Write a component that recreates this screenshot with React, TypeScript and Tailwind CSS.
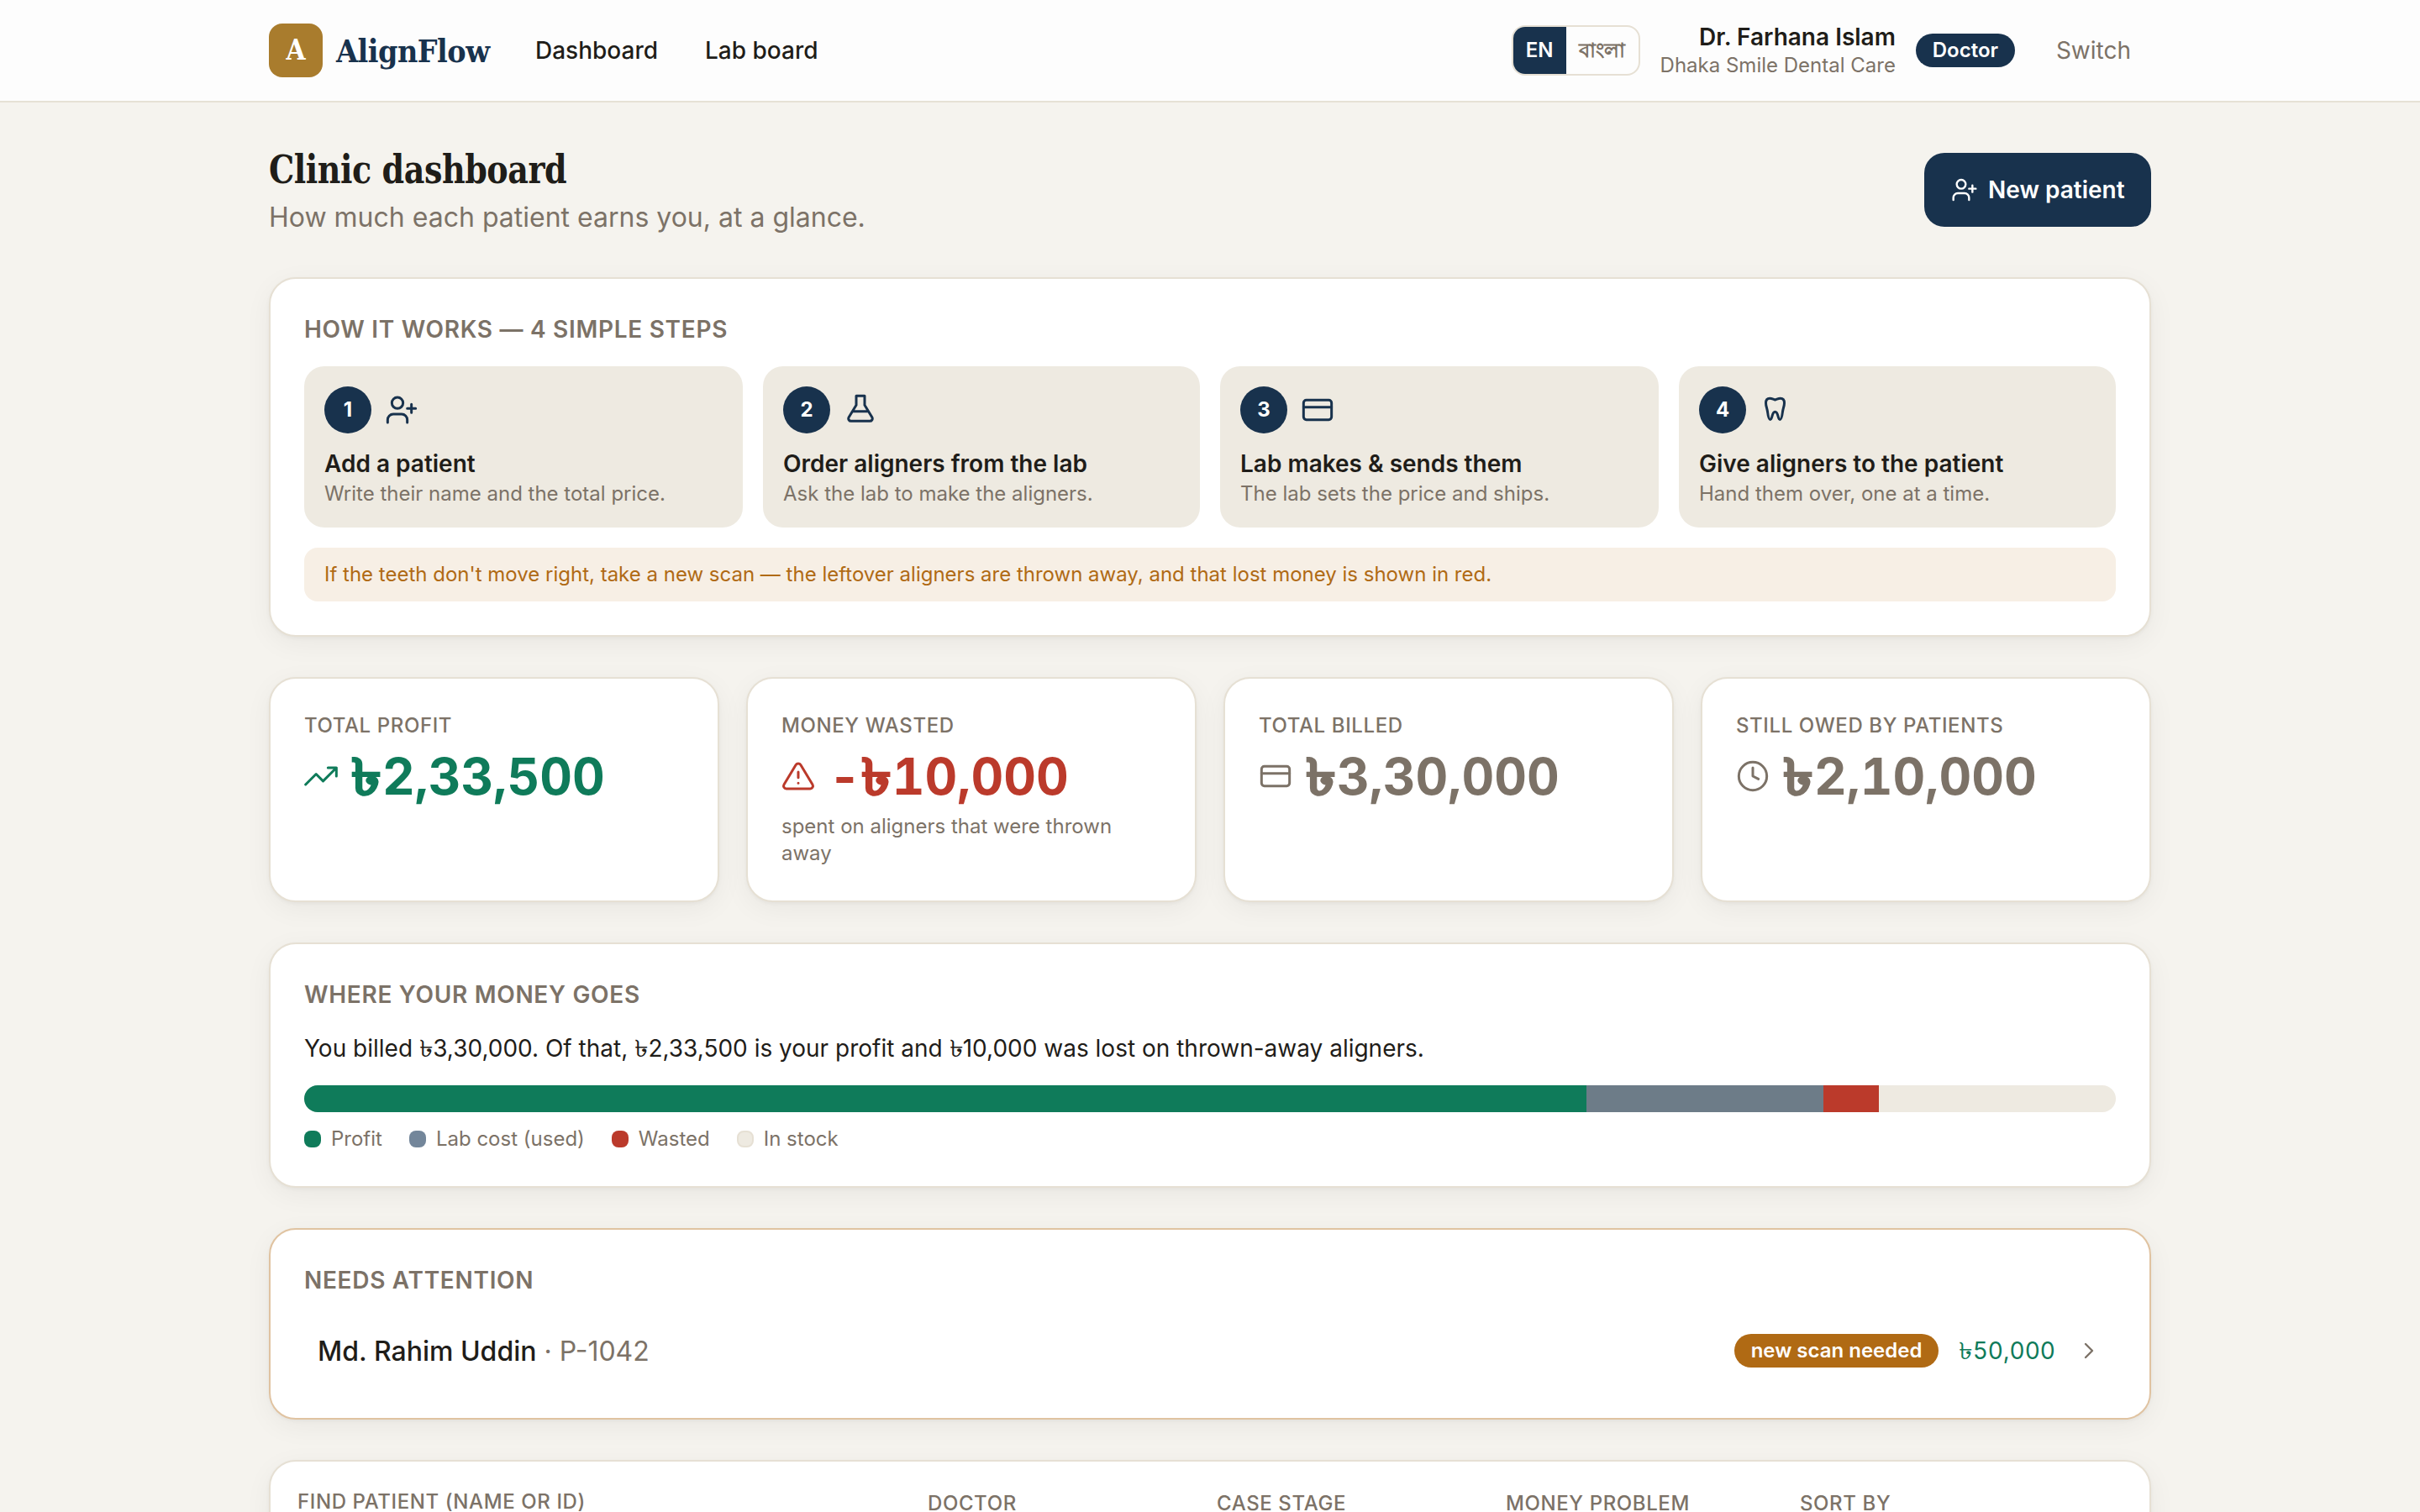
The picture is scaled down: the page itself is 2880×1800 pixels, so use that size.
import type { ReactNode } from 'react'
import clsx from 'clsx'

type IconProps = { className?: string }

function Svg({ className, children }: IconProps & { children: ReactNode }) {
  return (
    <svg
      viewBox="0 0 24 24"
      fill="none"
      stroke="currentColor"
      strokeWidth={1.8}
      strokeLinecap="round"
      strokeLinejoin="round"
      className={clsx('shrink-0', className)}
    >
      {children}
    </svg>
  )
}

const UserPlusIcon = ({ className }: IconProps) => (
  <Svg className={className}>
    <circle cx="9" cy="7" r="4" />
    <path d="M2 21v-2a4 4 0 0 1 4-4h6a4 4 0 0 1 4 4v2M19 8v6M22 11h-6" />
  </Svg>
)

const FlaskIcon = ({ className }: IconProps) => (
  <Svg className={className}>
    <path d="M9 2h6M9 2v6.500L3.700 17.300a1.800 1.800 0 0 0 1.600 2.700h13.400a1.800 1.800 0 0 0 1.600-2.700L15 8.500V2M6.500 13h11" />
  </Svg>
)

const CardIcon = ({ className }: IconProps) => (
  <Svg className={className}>
    <rect x="2" y="5" width="20" height="14" rx="2" />
    <path d="M2 10h20" />
  </Svg>
)

const ToothIcon = ({ className }: IconProps) => (
  <Svg className={className}>
    <path d="M11.100 4.800C9.500 4.300 8.800 3.700 7.300 3.700 5.500 3.700 4.500 5 4.500 7c0 2.200.9 4 1.200 6.200.3 2.400.7 5.700 1.900 5.700 1.700 0 1.100-5.600 3.500-5.600s1.800 5.600 3.500 5.600c1.200 0 1.600-3.300 1.900-5.700.3-2.200 1.200-4 1.200-6.200 0-2-1-3.300-2.800-3.300-1.500 0-2.200.6-3.800 1.100z" />
  </Svg>
)

const TrendIcon = ({ className }: IconProps) => (
  <Svg className={className}>
    <path d="M23 6l-9.500 9.500-5-5L1 18M17 6h6v6" />
  </Svg>
)

const AlertIcon = ({ className }: IconProps) => (
  <Svg className={className}>
    <path d="M10.300 3.900 1.800 18a2 2 0 0 0 1.700 3h17a2 2 0 0 0 1.700-3L13.700 3.900a2 2 0 0 0-3.400 0zM12 9v4M12 17h.01" />
  </Svg>
)

const ClockIcon = ({ className }: IconProps) => (
  <Svg className={className}>
    <circle cx="12" cy="12" r="10" />
    <path d="M12 6v6l4 2" />
  </Svg>
)

const ChevronIcon = ({ className }: IconProps) => (
  <Svg className={className}>
    <path d="M9 18l6-6-6-6" />
  </Svg>
)

// Taka sign, stretched a little so it sits well next to the Inter digits
function Taka({ bold }: { bold?: boolean }) {
  return (
    <span
      className={clsx(
        'inline-block origin-left scale-x-[1.2]',
        bold ? 'mr-[0.115em] [-webkit-text-stroke:1.5px_currentColor]' : 'mr-[0.08em]',
      )}
    >
      ৳
    </span>
  )
}

const steps = [
  { icon: UserPlusIcon, title: 'Add a patient', text: 'Write their name and the total price.' },
  { icon: FlaskIcon, title: 'Order aligners from the lab', text: 'Ask the lab to make the aligners.' },
  { icon: CardIcon, title: 'Lab makes & sends them', text: 'The lab sets the price and ships.' },
  { icon: ToothIcon, title: 'Give aligners to the patient', text: 'Hand them over, one at a time.' },
]

const stats = [
  { icon: TrendIcon, label: 'Total profit', sign: '', amount: '2,33,500', color: 'text-[#0f7b5a]' },
  {
    icon: AlertIcon,
    label: 'Money wasted',
    sign: '-',
    amount: '10,000',
    color: 'text-[#bb3a2b]',
    hint: 'spent on aligners that were thrown away',
  },
  { icon: CardIcon, label: 'Total billed', sign: '', amount: '3,30,000', color: 'text-[#7c7267]' },
  { icon: ClockIcon, label: 'Still owed by patients', sign: '', amount: '2,10,000', color: 'text-[#7c7267]' },
]

const legend = [
  { label: 'Profit', color: 'bg-[#0f7b5a]' },
  { label: 'Lab cost (used)', color: 'bg-[#73869a]' },
  { label: 'Wasted', color: 'bg-[#bb3a2b]' },
  { label: 'In stock', color: 'bg-[#eeeae1] border-2 border-[#e6e0d4]' },
]

function Card({ className, children }: { className?: string; children: ReactNode }) {
  return (
    <section
      className={clsx(
        'rounded-[32px] border-2 bg-white shadow-[0_2px_4px_rgba(28,26,22,0.04),0_8px_32px_rgba(28,26,22,0.05)]',
        className,
      )}
    >
      {children}
    </section>
  )
}

function SectionTitle({ children }: { children: ReactNode }) {
  return (
    <h2 className="mb-6 text-[28px] leading-10 font-semibold tracking-[0.7px] uppercase text-[#7c7267]">{children}</h2>
  )
}

function Header() {
  return (
    <header className="h-[122px] border-b-2 border-[#e6e1d5] bg-[#fdfdfd]">
      <div className="mx-auto flex h-[120px] w-[2240px] items-center">
        <div className="flex items-center gap-4">
          <span className="flex size-16 items-center justify-center rounded-2xl bg-[#a97c2d] font-['DejaVu_Serif_Condensed','DejaVu_Serif',serif] text-[33px] font-bold text-white">
            A
          </span>
          <span className="w-[182px] whitespace-nowrap font-['DejaVu_Serif_Condensed','DejaVu_Serif',serif] text-[38px] font-bold text-[#18324d]">
            <span className="inline-block origin-left scale-x-[0.98] tracking-[-0.5px]">AlignFlow</span>
          </span>
        </div>
        <nav className="ml-[55px] flex gap-14 text-[28px] font-medium">
          <a>Dashboard</a>
          <a>Lab board</a>
        </nav>
        <div className="ml-auto flex items-center gap-6">
          <div className="flex h-[60px] w-[153px] overflow-hidden rounded-2xl border-2 border-[#e6e0d4] text-[24px] font-semibold">
            <span className="flex w-[63px] items-center justify-center bg-[#18324d] text-white">EN</span>
            <span className="flex flex-1 items-center justify-center text-[#7c7267]">বাংলা</span>
          </div>
          <div className="text-right">
            <div className="text-[28px] leading-[35px] font-semibold">Dr. Farhana Islam</div>
            <div className="text-[24px] leading-8 text-[#7c7267]">Dhaka Smile Dental Care</div>
          </div>
          <span className="flex h-10 w-[118px] items-center justify-center rounded-full bg-[#18324d] text-[24px] font-semibold text-white">
            Doctor
          </span>
          <button className="pr-6 pl-[25px] text-[28px] text-[#7c7267]">Switch</button>
        </div>
      </div>
    </header>
  )
}

function HowItWorks() {
  return (
    <Card className="border-[#e6e0d4] p-10">
      <SectionTitle>How it works — 4 simple steps</SectionTitle>
      <div className="grid grid-cols-[522px_520px_522px_520px] gap-6">
        {steps.map(({ icon: Icon, title, text }, i) => (
          <div key={title} className="rounded-3xl bg-[#eeeae1] p-6">
            <div className="flex items-center gap-4">
              <span className="flex size-14 items-center justify-center rounded-full bg-[#18324d] text-[24px] font-bold text-white">
                {i + 1}
              </span>
              <Icon className="size-10 text-[#18324d]" />
            </div>
            <div className="mt-4 text-[28px] leading-10 font-semibold">{title}</div>
            <div className="text-[24px] leading-8 text-[#7c7267]">{text}</div>
          </div>
        ))}
      </div>
      <p className="mt-6 rounded-2xl bg-[#f7efe5] px-6 py-4 text-[24px] leading-8 text-[#b06a14]">
        If the teeth don't move right, take a new scan — the leftover aligners are thrown away, and that lost money is
        shown in red.
      </p>
    </Card>
  )
}

function Stats() {
  return (
    <div className="grid grid-cols-4 gap-8">
      {stats.map(({ icon: Icon, label, sign, amount, color, hint }) => (
        <Card key={label} className="h-[268px] border-[#e6e0d4] p-10">
          <div className="text-[24px] leading-8 font-medium tracking-[0.6px] uppercase text-[#7c7267]">{label}</div>
          <div className={clsx('mt-2 flex items-center gap-4 text-[60px] leading-[72px] font-bold tabular-nums', color)}>
            <Icon className="size-10" />
            <span>
              {sign}
              <Taka bold />
              {amount}
            </span>
          </div>
          {hint && <div className="mt-2 text-[24px] leading-8 text-[#7c7267]">{hint}</div>}
        </Card>
      ))}
    </div>
  )
}

function MoneyBreakdown() {
  return (
    <Card className="border-[#e6e0d4] p-10">
      <SectionTitle>Where your money goes</SectionTitle>
      <p className="text-[28px] leading-10">
        You billed <Taka />
        3,30,000. Of that, <Taka />
        2,33,500 is your profit and <Taka />
        10,000 was lost on thrown-away aligners.
      </p>
      <div className="mt-6 flex h-8 overflow-hidden rounded-full bg-[#eeeae1]">
        <div className="w-[1526px] bg-[#0f7b5a]" />
        <div className="w-[282px] bg-[#6d7c88]" />
        <div className="w-[66px] bg-[#bb3a2b]" />
      </div>
      <div className="mt-4 flex gap-8 text-[24px] leading-8 text-[#7c7267]">
        {legend.map(item => (
          <span key={item.label} className="flex items-center gap-3">
            <span className={clsx('size-5 rounded-lg', item.color)} />
            {item.label}
          </span>
        ))}
      </div>
    </Card>
  )
}

function NeedsAttention() {
  return (
    <Card className="border-[#e0c3a1] p-10">
      <SectionTitle>Needs attention</SectionTitle>
      <div className="flex h-20 items-center justify-between px-4 text-[32px] leading-[48px]">
        <div className="pt-0.5">
          <span className="font-medium">Md. Rahim Uddin</span> <span className="text-[#7c7267]">· P-1042</span>
        </div>
        <div className="flex items-center gap-6">
          <span className="flex h-10 items-center rounded-full bg-[#b06a14] px-5 text-[24px] font-semibold text-white">
            new scan needed
          </span>
          <span className="text-[28px] tabular-nums text-[#0f7b5a]">
            <Taka />
            50,000
          </span>
          <ChevronIcon className="size-8 text-[#7c7267]" />
        </div>
      </div>
    </Card>
  )
}

function Filters() {
  return (
    <Card className="h-[200px] border-[#e6e0d4] px-8 pt-[34px]">
      <div className="grid grid-cols-[750px_344px_344px_350px_1fr] text-[24px] leading-8 font-medium tracking-[0.6px] uppercase text-[#7c7267]">
        <span className="-mt-0.5">Find patient (name or ID)</span>
        <span>Doctor</span>
        <span>Case stage</span>
        <span>Money problem</span>
        <span>Sort by</span>
      </div>
    </Card>
  )
}

export default function App() {
  return (
    <div className="h-[1800px] w-[2880px] overflow-hidden bg-[#f5f3ee] font-[Inter,sans-serif] text-[#1f1d19]">
      <Header />
      <main className="mx-auto flex w-[2240px] flex-col gap-12 pt-12">
        <div className="flex h-[112px] items-center justify-between">
          <div>
            <h1 className="font-['DejaVu_Serif_Condensed','DejaVu_Serif',serif] text-[46px] leading-[66px] font-bold">
              <span className="inline-block origin-left scale-x-[0.92] tracking-[-0.5px]">Clinic dashboard</span>
            </h1>
            <p className="text-[32px] leading-[48px] text-[#7c7267]">How much each patient earns you, at a glance.</p>
          </div>
          <button className="flex h-[88px] w-[270px] items-center gap-3 rounded-3xl bg-[#18324d] px-8 text-[28px] font-semibold whitespace-nowrap text-white">
            <UserPlusIcon className="size-8" />
            New patient
          </button>
        </div>
        <HowItWorks />
        <Stats />
        <MoneyBreakdown />
        <NeedsAttention />
        <Filters />
      </main>
    </div>
  )
}
